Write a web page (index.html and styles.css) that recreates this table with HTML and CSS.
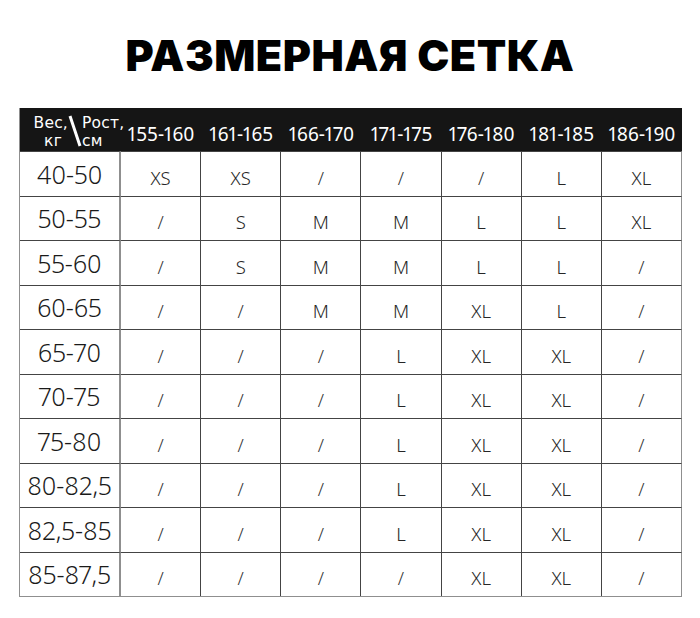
FILE: index.html
```html
<!DOCTYPE html>
<html lang="ru">
<head>
<meta charset="utf-8">
<title>Размерная сетка</title>
<link rel="stylesheet" href="styles.css">
</head>
<body>
<h1 class="title">РАЗМЕРНАЯ СЕТКА</h1>
<div class="grid">
  <div class="cell head corner">
    <div class="corner-l"><span>Вес,</span><span class="sub">кг</span></div>
    <svg class="corner-slash" width="14" height="32" viewBox="0 0 14 32"><line x1="2" y1="1" x2="12" y2="31" stroke="#fff" stroke-width="3"/></svg>
    <div class="corner-r"><span>Рост,</span><span class="sub">см</span></div>
  </div>
  <div class="cell head">155-160</div>
  <div class="cell head">161-165</div>
  <div class="cell head">166-170</div>
  <div class="cell head">171-175</div>
  <div class="cell head">176-180</div>
  <div class="cell head">181-185</div>
  <div class="cell head">186-190</div>

  <div class="cell w">40-50</div><div class="cell">XS</div><div class="cell">XS</div><div class="cell s">/</div><div class="cell s">/</div><div class="cell s">/</div><div class="cell">L</div><div class="cell">XL</div>
  <div class="cell w">50-55</div><div class="cell s">/</div><div class="cell">S</div><div class="cell">M</div><div class="cell">M</div><div class="cell">L</div><div class="cell">L</div><div class="cell">XL</div>
  <div class="cell w">55-60</div><div class="cell s">/</div><div class="cell">S</div><div class="cell">M</div><div class="cell">M</div><div class="cell">L</div><div class="cell">L</div><div class="cell s">/</div>
  <div class="cell w">60-65</div><div class="cell s">/</div><div class="cell s">/</div><div class="cell">M</div><div class="cell">M</div><div class="cell">XL</div><div class="cell">L</div><div class="cell s">/</div>
  <div class="cell w">65-70</div><div class="cell s">/</div><div class="cell s">/</div><div class="cell s">/</div><div class="cell">L</div><div class="cell">XL</div><div class="cell">XL</div><div class="cell s">/</div>
  <div class="cell w">70-75</div><div class="cell s">/</div><div class="cell s">/</div><div class="cell s">/</div><div class="cell">L</div><div class="cell">XL</div><div class="cell">XL</div><div class="cell s">/</div>
  <div class="cell w">75-80</div><div class="cell s">/</div><div class="cell s">/</div><div class="cell s">/</div><div class="cell">L</div><div class="cell">XL</div><div class="cell">XL</div><div class="cell s">/</div>
  <div class="cell w">80-82,5</div><div class="cell s">/</div><div class="cell s">/</div><div class="cell s">/</div><div class="cell">L</div><div class="cell">XL</div><div class="cell">XL</div><div class="cell s">/</div>
  <div class="cell w">82,5-85</div><div class="cell s">/</div><div class="cell s">/</div><div class="cell s">/</div><div class="cell">L</div><div class="cell">XL</div><div class="cell">XL</div><div class="cell s">/</div>
  <div class="cell w">85-87,5</div><div class="cell s">/</div><div class="cell s">/</div><div class="cell s">/</div><div class="cell s">/</div><div class="cell">XL</div><div class="cell">XL</div><div class="cell s">/</div>
</div>
</body>
</html>
```

FILE: styles.css
```css
html, body {
  margin: 0;
  padding: 0;
  background: #fff;
}
body {
  font-family: "Noto Sans", "DejaVu Sans", sans-serif;
  color: #222;
}
.title {
  margin: 0;
  padding-top: 34px;
  height: 43px;
  line-height: 43px;
  font-family: "Inter", "Noto Sans", sans-serif;
  font-weight: 900;
  font-size: 43px;
  text-align: center;
  color: #000;
  letter-spacing: 0.5px;
}
.grid {
  margin: 31px 0 0 19px;
  width: 663px;
  display: grid;
  grid-template-columns: 101px repeat(7, 1fr);
  grid-template-rows: 43px repeat(10, 44.5px);
  border-left: 1px solid #8f8f8f;
  border-bottom: 1px solid #8f8f8f;
  box-sizing: border-box;
}
.cell {
  display: flex;
  align-items: center;
  justify-content: center;
  border-right: 1px solid #444;
  border-top: 1px solid #444;
  font-size: 18.5px;
  font-weight: 300;
  color: #262626;
  padding-top: 7px;
  box-sizing: border-box;
  font-variant-numeric: proportional-nums;
}
.cell:nth-child(8n) {
  border-right-color: #8f8f8f;
}
.cell.w {
  font-size: 25px;
  color: #1a1a1a;
  padding-top: 0;
  border-right: 2px solid #8f8f8f;
}
.cell.s {
  font-size: 18px;
  padding-top: 8px;
  color: #333;
}
.cell.head {
  background: #151515;
  color: #fff;
  font-size: 19px;
  font-weight: 400;
  border: none;
  padding-top: 8px;
}
.cell.corner {
  position: relative;
  z-index: 1;
  padding-top: 4px;
  padding-left: 8px;
  justify-content: flex-start;
  font-family: "DejaVu Sans", "Noto Sans", sans-serif;
  font-size: 15.5px;
  letter-spacing: 0.2px;
  overflow: visible;
}
.corner-l, .corner-r {
  display: flex;
  flex-direction: column;
  line-height: 18px;
  flex-shrink: 0;
}
.corner-l {
  width: 40px;
  align-items: flex-end;
}
.corner-l .sub {
  padding-right: 6px;
}
.corner-r {
  width: 40px;
  align-items: flex-start;
  margin-left: 0;
}
.corner-slash {
  display: block;
  flex-shrink: 0;
  margin-top: -2px;
}
```
